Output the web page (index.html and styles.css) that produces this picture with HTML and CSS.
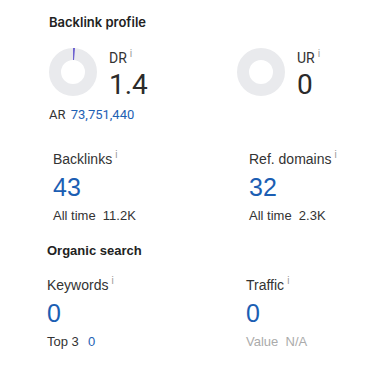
FILE: index.html
```html
<!DOCTYPE html>
<html lang="en">
<head>
  <meta charset="UTF-8">
  <title>Backlink profile</title>
  <link rel="stylesheet" href="styles.css">
</head>
<body>
  <div class="panel">
    <h2 class="title title-top">Backlink profile</h2>

    <div class="ratings">
      <div class="rating">
        <svg class="donut" width="48" height="48" viewBox="0 0 48 48">
          <circle cx="24" cy="24" r="18" fill="none" stroke="#e9eaed" stroke-width="12"/>
          <circle cx="24" cy="24" r="18" fill="none" stroke="#6e62d0" stroke-width="12"
                  stroke-dasharray="1.6 200" transform="rotate(-90 24 24)"/>
        </svg>
        <div class="rating-text">
          <div class="label">DR<sup>i</sup></div>
          <div class="big">1.4</div>
        </div>
      </div>
      <div class="rating">
        <svg class="donut" width="48" height="48" viewBox="0 0 48 48">
          <circle cx="24" cy="24" r="18" fill="none" stroke="#e9eaed" stroke-width="12"/>
        </svg>
        <div class="rating-text">
          <div class="label">UR<sup>i</sup></div>
          <div class="big">0</div>
        </div>
      </div>
    </div>
    <div class="ar">AR <a class="link">73,751,440</a></div>

    <div class="stats stats-links">
      <div class="stat">
        <div class="stat-label">Backlinks<sup>i</sup></div>
        <div class="stat-value">43</div>
        <div class="stat-sub">All time&nbsp; 11.2K</div>
      </div>
      <div class="stat">
        <div class="stat-label">Ref. domains<sup>i</sup></div>
        <div class="stat-value">32</div>
        <div class="stat-sub">All time&nbsp; 2.3K</div>
      </div>
    </div>

    <h2 class="title title-organic">Organic search</h2>

    <div class="stats stats-organic">
      <div class="stat">
        <div class="stat-label">Keywords<sup>i</sup></div>
        <div class="stat-value">0</div>
        <div class="stat-sub">Top 3&nbsp; <a class="link">0</a></div>
      </div>
      <div class="stat">
        <div class="stat-label">Traffic<sup>i</sup></div>
        <div class="stat-value">0</div>
        <div class="stat-sub muted">Value&nbsp; N/A</div>
      </div>
    </div>
  </div>
</body>
</html>
```

FILE: styles.css
```css
body {
  margin: 0;
  background: #ffffff;
  color: #333333;
  font-family: "Liberation Sans", Arial, sans-serif;
}

.panel {
  width: 385px;
  height: 385px;
}

.title {
  margin: 0;
  font-family: Inter, "Liberation Sans", sans-serif;
  font-size: 13px;
  font-weight: 600;
  line-height: 16px;
  color: #222222;
}

.title-top {
  padding: 14px 0 0 49px;
}

.title-organic {
  padding: 0 0 0 47px;
  font-family: "Liberation Sans", Arial, sans-serif;
  font-weight: 700;
}

sup {
  font-size: 10px;
  color: #9a9a9a;
  margin-left: 3px;
  vertical-align: 6px;
  line-height: 0;
}

.ratings {
  display: grid;
  grid-template-columns: 188px 1fr;
  padding: 18px 0 0 49px;
}

.rating {
  display: flex;
  gap: 12px;
}

.donut {
  display: block;
  flex: none;
}

.rating-text {
  font-family: Roboto, sans-serif;
  padding-top: 2px;
}

.label {
  font-size: 14px;
  line-height: 16px;
}

.big {
  font-size: 28px;
  line-height: 30px;
  margin-top: 4px;
  color: #2b2b2b;
}

.ar {
  font-family: Roboto, sans-serif;
  font-size: 13px;
  line-height: 16px;
  padding: 7px 0 0 49px;
}

.link {
  color: #1e61b4;
  margin-left: 2px;
}

.stats {
  display: grid;
}

.stats-links {
  grid-template-columns: 196px 1fr;
  padding: 28px 0 0 53px;
  margin-bottom: 19px;
}

.stats-organic {
  grid-template-columns: 199px 1fr;
  padding: 18px 0 0 47px;
}

.stat-label {
  font-size: 14px;
  line-height: 16px;
}

.stat-value {
  font-size: 25px;
  line-height: 28px;
  margin-top: 6px;
  color: #1b5eb3;
}

.stat-sub {
  font-size: 13px;
  line-height: 16px;
  margin-top: 7px;
}

.muted {
  color: #ababab;
}
```
